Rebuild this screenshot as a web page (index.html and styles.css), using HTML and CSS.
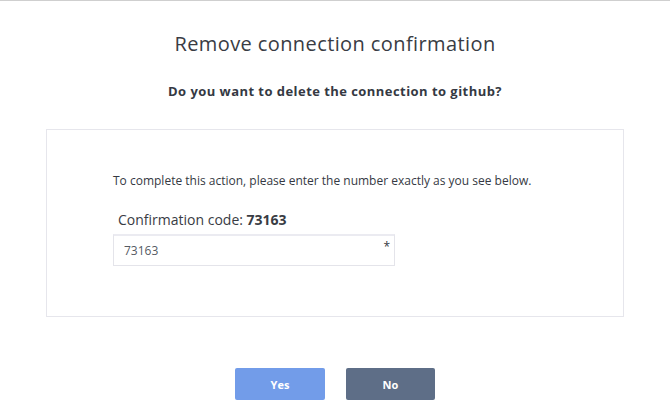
FILE: index.html
```html
<!DOCTYPE html>
<html>
<head>
<meta charset="utf-8">
<link rel="stylesheet" href="styles.css">
</head>
<body>
<div class="page">
  <h1 class="title">Remove connection confirmation</h1>
  <p class="question">Do you want to delete the connection to github?</p>
  <div class="box">
    <p class="hint">To complete this action, please enter the number exactly as you see below.</p>
    <div class="label">Confirmation code: <b>73163</b></div>
    <div class="field">
      <input class="input" type="text" value="73163">
      <span class="req">*</span>
    </div>
  </div>
  <div class="actions">
    <button class="btn yes">Yes</button>
    <button class="btn no">No</button>
  </div>
</div>
</body>
</html>
```
FILE: styles.css
```css
html, body {
  margin: 0;
  padding: 0;
  background: #fff;
}
body {
  font-family: "Open Sans", "Liberation Sans", sans-serif;
  color: #333;
}
.page {
  border-top: 1px solid #cfcfcf;
  width: 670px;
  height: 418px;
  display: flex;
  flex-direction: column;
  align-items: center;
}
.title {
  margin: 29px 0 0;
  font-size: 20px;
  letter-spacing: 0.4px;
  font-weight: 400;
  line-height: 28px;
  color: #393c44;
}
.question {
  margin: 24px 0 0;
  font-size: 13px;
  letter-spacing: 0.45px;
  font-weight: 700;
  line-height: 18px;
  color: #353943;
}
.box {
  margin-top: 29px;
  box-sizing: border-box;
  width: 578px;
  height: 188px;
  border: 1px solid #e6e6ec;
  padding: 43px 0 0 66px;
}
.hint {
  margin: 0;
  font-size: 12px;
  line-height: 16px;
  color: #353943;
}
.label {
  margin: 22px 0 0 5px;
  font-size: 14px;
  line-height: 18px;
  color: #393c44;
}
.label b {
  font-weight: 700;
}
.field {
  position: relative;
  margin-top: 5px;
  width: 282px;
}
.input {
  box-sizing: border-box;
  width: 282px;
  height: 32px;
  border: 1px solid #e4e4ea;
  border-top: 2px solid #ebebf1;
  padding: 0 10px;
  font-family: "Open Sans", "Liberation Sans", sans-serif;
  font-size: 12px;
  color: #555a63;
  outline: none;
  display: block;
}
.req {
  position: absolute;
  right: 5px;
  top: 4px;
  font-size: 12px;
  color: #353943;
}
.actions {
  margin-top: 51px;
  display: flex;
  gap: 21px;
}
.btn {
  width: 90px;
  height: 32px;
  border: none;
  border-radius: 2px;
  color: #fff;
  font-family: "Open Sans", "Liberation Sans", sans-serif;
  font-size: 11px;
  font-weight: 700;
  padding: 0;
}
.yes {
  background: #729ce9;
}
.no {
  width: 89px;
  background: #5e6e87;
}
```
